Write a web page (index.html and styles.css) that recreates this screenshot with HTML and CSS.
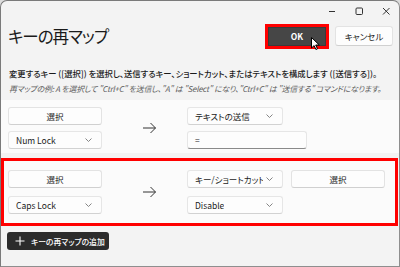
FILE: index.html
```html
<!DOCTYPE html>
<html lang="ja">
<head>
<meta charset="utf-8">
<title>キーの再マップ</title>
<link rel="stylesheet" href="styles.css">
</head>
<body>
<div class="window">
    <div class="titlebar">
        <svg class="ctl" width="10" height="10" viewBox="0 0 10 10"><path d="M2 5.5h6" stroke="#333" stroke-width="1"/></svg>
        <svg class="ctl" width="10" height="10" viewBox="0 0 10 10"><rect x="2" y="2" width="6.5" height="6.5" rx="1" fill="none" stroke="#333" stroke-width="1"/></svg>
        <svg class="ctl ctl-close" width="10" height="10" viewBox="0 0 10 10"><path d="M2 2l6.5 6.5M8.5 2L2 8.5" stroke="#333" stroke-width="1"/></svg>
    </div>

    <div class="header">
        <h1 class="title">キーの再マップ</h1>
        <div class="actions">
            <span class="focus-ring"><button class="btn btn-primary">OK</button></span>
            <button class="btn">キャンセル</button>
        </div>
        <svg class="cursor" width="9" height="13" viewBox="0 0 9 13"><path d="M0.5 0.5v10.5l2.6-2.4 1.8 3.9 1.6-0.7-1.8-3.8h3.6z" fill="#fff" stroke="#000" stroke-width="1"/></svg>
    </div>

    <p class="desc">変更するキー ([選択]) を選択し、送信するキー、ショートカット、またはテキストを構成します ([送信する])。</p>
    <p class="example">再マップの例: A を選択して "Ctrl+C" を送信し、"A" は "Select" になり、"Ctrl+C" は "送信する" コマンドになります。</p>

    <div class="list">
        <div class="row row-first">
            <button class="btn btn-key">選択</button>
            <svg class="arrow" width="15" height="12" viewBox="0 0 15 12"><path d="M1 6h12.5M8.5 1l5 5-5 5" fill="none" stroke="#333" stroke-width="1"/></svg>
            <div class="dropdown">
                <span class="dd-text">テキストの送信</span>
                <svg class="chev" width="7" height="4" viewBox="0 0 7 4"><path d="M0.5 0.5l3 3 3-3" fill="none" stroke="#777" stroke-width="0.9"/></svg>
            </div>
            <div class="dropdown">
                <span class="dd-text">Num Lock</span>
                <svg class="chev" width="7" height="4" viewBox="0 0 7 4"><path d="M0.5 0.5l3 3 3-3" fill="none" stroke="#777" stroke-width="0.9"/></svg>
            </div>
            <div class="textbox">=</div>
        </div>

        <div class="row row-selected">
            <button class="btn btn-key">選択</button>
            <svg class="arrow" width="15" height="12" viewBox="0 0 15 12"><path d="M1 6h12.5M8.5 1l5 5-5 5" fill="none" stroke="#333" stroke-width="1"/></svg>
            <div class="dropdown">
                <span class="dd-text">キー/ショートカットの送信</span>
                <svg class="chev" width="7" height="4" viewBox="0 0 7 4"><path d="M0.5 0.5l3 3 3-3" fill="none" stroke="#777" stroke-width="0.9"/></svg>
            </div>
            <button class="btn btn-key btn-extra">選択</button>
            <div class="dropdown">
                <span class="dd-text">Caps Lock</span>
                <svg class="chev" width="7" height="4" viewBox="0 0 7 4"><path d="M0.5 0.5l3 3 3-3" fill="none" stroke="#777" stroke-width="0.9"/></svg>
            </div>
            <div class="dropdown">
                <span class="dd-text">Disable</span>
                <svg class="chev" width="7" height="4" viewBox="0 0 7 4"><path d="M0.5 0.5l3 3 3-3" fill="none" stroke="#777" stroke-width="0.9"/></svg>
            </div>
        </div>
    </div>

    <button class="btn-add">
        <svg width="10" height="10" viewBox="0 0 10 10"><path d="M5 0.5v9M0.5 5h9" stroke="#fff" stroke-width="1.1"/></svg>
        <span>キーの再マップの追加</span>
    </button>
</div>
</body>
</html>
```

FILE: styles.css
```css
html, body {
    margin : 0;
    padding : 0;
}

body {
    width : 400px;
    height : 267px;
    overflow : hidden;
    background-color : #dcdcdc;
    font-family : "Noto Sans CJK JP", "Noto Sans", sans-serif;
    font-feature-settings : "palt";
    color : #1b1b1b;
}

.window {
    box-sizing : border-box;
    width : 400px;
    height : 267px;
    background-color : #f3f3f3;
    border : 1px solid #7a7a7a;
    border-right-color : #8e8e8e;
    border-bottom-color : #8e8e8e;
    border-radius : 7px 7px 0 0;
    position : relative;
    overflow : hidden;
}

/* title bar */

.titlebar {
    height : 19px;
    display : flex;
    justify-content : flex-end;
    align-items : center;
    padding-right : 8px;
    gap : 17px;
}

.ctl {
    display : block;
}

/* header */

.header {
    height : 32px;
    display : flex;
    justify-content : space-between;
    align-items : center;
    padding : 0 6px 0 7px;
    position : relative;
}

.title {
    margin : 0;
    font-size : 16.5px;
    font-weight : normal;
    letter-spacing : -1px;
    color : #1a1a1a;
}

.actions {
    display : flex;
    align-items : center;
    gap : 6px;
}

.btn {
    box-sizing : border-box;
    height : 20px;
    font-family : inherit;
    font-feature-settings : "palt";
    font-size : 8.5px;
    color : #1b1b1b;
    background-color : #fdfdfd;
    border : 1px solid #e3e3e3;
    border-bottom-color : #d0d0d0;
    border-radius : 3px;
    padding : 0;
    cursor : default;
}

.actions .btn {
    width : 58px;
}

.focus-ring {
    display : block;
    border : 3px solid #ff0000;
    line-height : 0;
}

.actions .btn-primary {
    display : block;
    width : 58px;
    height : 19px;
    background-color : #464646;
    border : 1px solid #3a3a3a;
    border-radius : 0;
    color : #ffffff;
    font-weight : bold;
}

.cursor {
    position : absolute;
    left : 310px;
    top : 17px;
}

/* description */

.desc, .example {
    margin : 0;
    padding-left : 8px;
    line-height : 16px;
    white-space : nowrap;
}

.desc {
    margin-top : 13px;
    font-size : 8.3px;
    font-weight : 500;
    color : #1b1b1b;
}

.example {
    font-size : 7.9px;
    letter-spacing : -0.2px;
    font-style : italic;
    color : #5e5e5e;
}

/* remap rows */

.list {
    margin-top : 3px;
}

.row {
    display : grid;
    grid-template-columns : 94px 85px 96px 94px;
    grid-template-rows : 18px 18px;
    column-gap : 0;
    background-color : #fbfbfb;
}

.row-first {
    padding : 7px 0 4px 7px;
    row-gap : 6px;
}

.row-selected {
    margin-top : 5px;
    margin-right : 1px;
    padding : 9px 0 9px 4px;
    row-gap : 8px;
    border : 3px solid #ff0000;
}

.btn-key {
    height : 18px;
    width : 94px;
    grid-column : 1;
}

.btn-extra {
    grid-column : 4;
    grid-row : 1;
    margin-left : 8px;
    width : 94px;
}

.arrow {
    grid-column : 2;
    grid-row : 1 / span 2;
    align-self : center;
    margin-left : 40px;
}

.dropdown {
    box-sizing : border-box;
    height : 18px;
    display : flex;
    align-items : center;
    justify-content : space-between;
    padding : 0 9px 0 7px;
    background-color : #fdfdfd;
    border : 1px solid #e6e6e6;
    border-bottom-color : #d2d2d2;
    border-radius : 3px;
    font-size : 8.5px;
}

.row .dropdown:nth-of-type(1) {
    grid-column : 3;
    grid-row : 1;
}

.row-first .dropdown:nth-of-type(2) {
    grid-column : 1;
    grid-row : 2;
}

.row-selected .dropdown:nth-of-type(2) {
    grid-column : 1;
    grid-row : 2;
}

.row-selected .dropdown:nth-of-type(3) {
    grid-column : 3;
    grid-row : 2;
}

.dd-text {
    white-space : nowrap;
    overflow : hidden;
    max-width : 75px;
}

.chev {
    flex : none;
    margin-left : 3px;
}

.textbox {
    box-sizing : border-box;
    grid-column : 3 / span 2;
    grid-row : 2;
    width : 120px;
    height : 18px;
    padding-left : 7px;
    font-size : 8.5px;
    line-height : 16px;
    background-color : #fdfdfd;
    border : 1px solid #e6e6e6;
    border-bottom-color : #8a8a8a;
    border-radius : 3px;
}

/* add button */

.btn-add {
    display : flex;
    align-items : center;
    gap : 6px;
    margin : 6px 0 0 6px;
    height : 18px;
    width : 102px;
    padding : 0 0 0 8px;
    background-color : #2c2c2c;
    color : #ffffff;
    border : none;
    border-radius : 3px;
    font-family : inherit;
    font-feature-settings : "palt";
    font-size : 7.8px;
    font-weight : 500;
    white-space : nowrap;
}

.btn-add svg {
    flex : none;
}
```
